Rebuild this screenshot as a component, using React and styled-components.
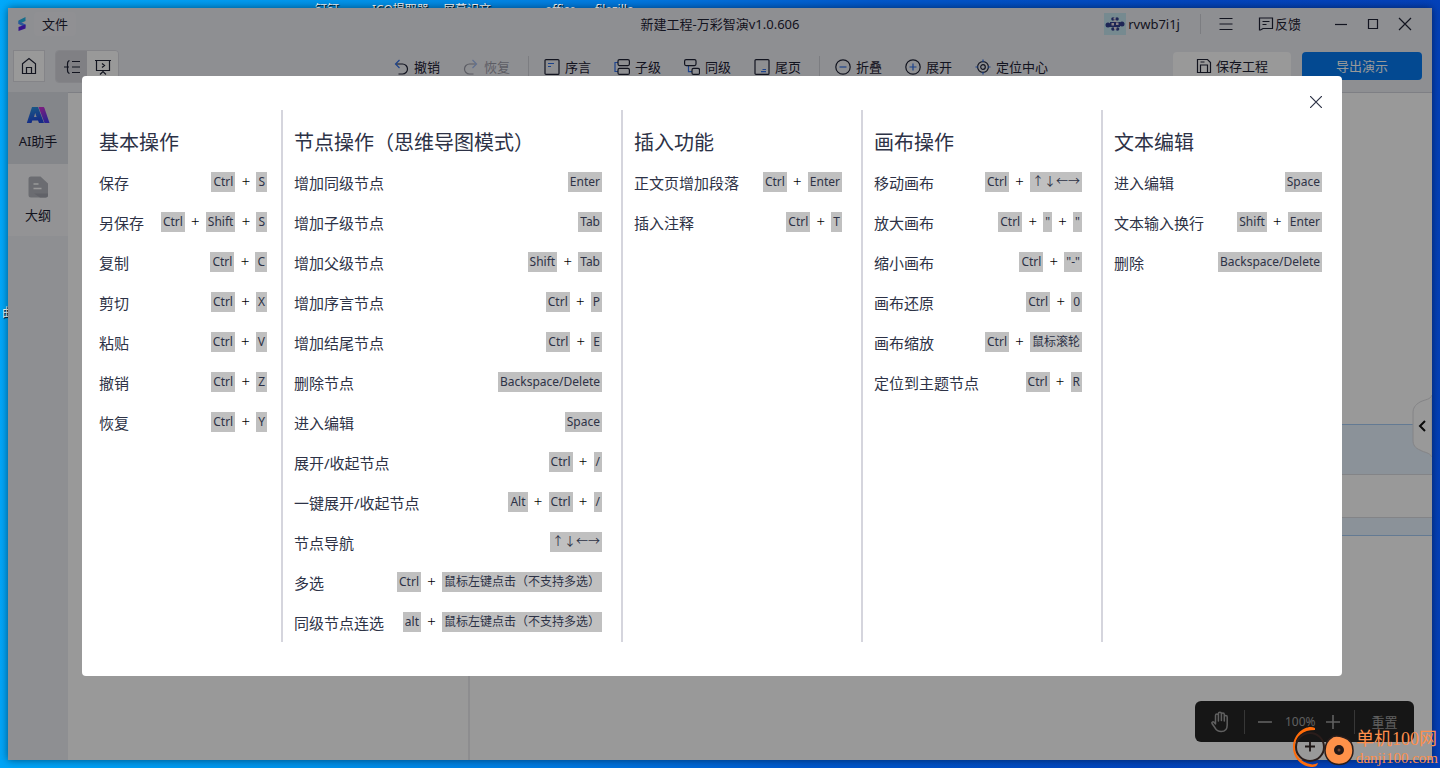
import React from 'react'
import styled, { createGlobalStyle } from 'styled-components'

const GlobalStyle = createGlobalStyle`
  * {
    box-sizing: border-box;
  }
  body {
    margin: 0;
    font-family: "Noto Sans", "Noto Sans CJK SC", sans-serif;
    font-size: 13px;
    line-height: 20px;
    color: #1e2235;
  }
  button {
    font: inherit;
    color: inherit;
    background: none;
    border: 0;
    padding: 0;
    cursor: pointer;
  }
  svg {
    display: block;
    flex: none;
  }
`

const columns = [
  {
    title: '基本操作',
    rows: [
      ['保存', ['Ctrl', 'S']],
      ['另保存', ['Ctrl', 'Shift', 'S']],
      ['复制', ['Ctrl', 'C']],
      ['剪切', ['Ctrl', 'X']],
      ['粘贴', ['Ctrl', 'V']],
      ['撤销', ['Ctrl', 'Z']],
      ['恢复', ['Ctrl', 'Y']],
    ],
  },
  {
    title: '节点操作（思维导图模式）',
    rows: [
      ['增加同级节点', ['Enter']],
      ['增加子级节点', ['Tab']],
      ['增加父级节点', ['Shift', 'Tab']],
      ['增加序言节点', ['Ctrl', 'P']],
      ['增加结尾节点', ['Ctrl', 'E']],
      ['删除节点', ['Backspace/Delete']],
      ['进入编辑', ['Space']],
      ['展开/收起节点', ['Ctrl', '/']],
      ['一键展开/收起节点', ['Alt', 'Ctrl', '/']],
      ['节点导航', ['↑↓←→']],
      ['多选', ['Ctrl', '鼠标左键点击（不支持多选）']],
      ['同级节点连选', ['alt', '鼠标左键点击（不支持多选）']],
    ],
  },
  {
    title: '插入功能',
    rows: [
      ['正文页增加段落', ['Ctrl', 'Enter']],
      ['插入注释', ['Ctrl', 'T']],
    ],
  },
  {
    title: '画布操作',
    rows: [
      ['移动画布', ['Ctrl', '↑↓←→']],
      ['放大画布', ['Ctrl', '"', '"']],
      ['缩小画布', ['Ctrl', '"-"']],
      ['画布还原', ['Ctrl', '0']],
      ['画布缩放', ['Ctrl', '鼠标滚轮']],
      ['定位到主题节点', ['Ctrl', 'R']],
    ],
  },
  {
    title: '文本编辑',
    rows: [
      ['进入编辑', ['Space']],
      ['文本输入换行', ['Shift', 'Enter']],
      ['删除', ['Backspace/Delete']],
    ],
  },
]

const desktopLabels = [
  { text: '钉钉', left: 315, top: 0 },
  { text: 'ICO提取器', left: 372, top: 0 },
  { text: '屏幕识文 ...', left: 443, top: 0 },
  { text: 'office', left: 545, top: 0 },
  { text: 'filezilla', left: 595, top: 0 },
  { text: '曲', left: 2, top: 303 },
]

const blue = '#2f6fe8'

const Icon = ({ children, size = 16, w = size, h = size }) => (
  <svg width={w} height={h} viewBox={`0 0 ${w} ${h}`} fill="none" stroke="currentColor" strokeWidth="1.2" aria-hidden="true">
    {children}
  </svg>
)

const LogoIcon = () => (
  <Icon w={10} h={16}>
    <path d="M8.500 1v4L1.500 8V4.500z" fill="#26b7e8" stroke="none" />
    <path d="M1.500 5l7 3.500v3L1.500 8z" fill="#4a8fff" stroke="none" />
    <path d="M8.500 8.500v4L1.500 15v-4z" fill="#5a22e8" stroke="none" />
  </Icon>
)

const HomeIcon = () => (
  <Icon size={18}>
    <path d="M2.500 6.800L9 1.500l6.500 5.300v9.700h-13zM6.500 16v-5.500h5V16" />
  </Icon>
)

const MindIcon = () => (
  <Icon w={18} h={16}>
    <path d="M1 8h5M6.500 1.500C4.500 2 4.500 4 4.500 5v6c0 1 0 3 2 3.500M9 2.500h8M9 8h8M9 13.500h8" />
  </Icon>
)

const BoardIcon = () => (
  <Icon w={18} h={16}>
    <path d="M1 1.500h16M2.500 1.500v10h13v-10M8 4.500l2.500 2L8 8.500M6 15.500l3-3 3 3" />
  </Icon>
)

const UndoIcon = () => (
  <Icon>
    <path d="M3 5h6.500a4.600 4.600 0 0 1 0 10H5.500" />
    <path d="M6.500 1L2.500 5l4 4" stroke={blue} />
  </Icon>
)

const RedoIcon = () => (
  <Icon>
    <path d="M13 5H6.500a4.600 4.600 0 0 0 0 10h4" />
    <path d="M9.500 1l4 4-4 4" stroke={blue} />
  </Icon>
)

const PrefaceIcon = () => (
  <Icon>
    <rect x="1" y=".6" width="14" height="14.800" rx="1" />
    <path d="M4 4.500h6M4 7.500h3" stroke={blue} />
  </Icon>
)

const ChildIcon = () => (
  <Icon>
    <path d="M4 3.500H1v9h3" stroke={blue} />
    <rect x="4" y=".6" width="11.400" height="6" rx="1.500" />
    <rect x="4" y="9.400" width="11.400" height="6" rx="1.500" />
  </Icon>
)

const SiblingIcon = () => (
  <Icon>
    <path d="M4.500 6.600v6H8" stroke={blue} />
    <rect x=".6" y=".6" width="11.400" height="6" rx="1.500" />
    <rect x="8" y="9.400" width="7.500" height="6" rx="1.500" />
  </Icon>
)

const EndPageIcon = () => (
  <Icon>
    <rect x="1" y=".6" width="14" height="14.800" rx="1" />
    <path d="M8.500 10.500h3.500M7 12.700h5" stroke={blue} />
  </Icon>
)

const FoldIcon = () => (
  <Icon>
    <circle cx="8" cy="8" r="7.200" />
    <path d="M4.500 8h7" stroke={blue} />
  </Icon>
)

const UnfoldIcon = () => (
  <Icon>
    <circle cx="8" cy="8" r="7.200" />
    <path d="M4.500 8h7M8 4.500v7" stroke={blue} />
  </Icon>
)

const LocateIcon = () => (
  <Icon>
    <circle cx="8" cy="8" r="5.400" />
    <circle cx="8" cy="8" r="2.300" />
    <path d="M8 .5v2.500M8 13v2.500M.5 8H3M13 8h2.500" stroke={blue} />
  </Icon>
)

const SaveIcon = () => (
  <Icon>
    <path d="M1.500 1.500h10l3 3v10h-13zM4.500 14.500V7h7v7.500M4.500 4h4" />
  </Icon>
)

const AiIcon = () => (
  <svg width="24" height="18" viewBox="0 0 24 18" aria-hidden="true">
    <defs>
      <linearGradient id="aiBlue" x1="0" y1="0" x2="0.300" y2="1">
        <stop offset="0" stopColor="#2d9be0" />
        <stop offset="1" stopColor="#2148e0" />
      </linearGradient>
      <linearGradient id="aiPink" x1="0" y1="0" x2="0.500" y2="1">
        <stop offset="0" stopColor="#e02fd0" />
        <stop offset="1" stopColor="#4a3cf0" />
      </linearGradient>
    </defs>
    <path d="M12.500 1H17c.8 0 1.200.5 1.500 1.200L23.500 17h-5z" fill="url(#aiPink)" />
    <path fillRule="evenodd" d="M6 1h6l6 16h-5l-1-2.500H6.300L5.500 17H.8zM9.200 7L8 11h2.600z" fill="url(#aiBlue)" />
  </svg>
)

const OutlineIcon = () => (
  <svg width="20" height="22" viewBox="0 0 20 22" aria-hidden="true">
    <path d="M3 .5h9.500L20 7.500V19a2.500 2.500 0 0 1-2.500 2.500H3A2.500 2.500 0 0 1 .5 19V3A2.500 2.500 0 0 1 3 .5z" fill="#b3b5bd" />
    <path d="M6 17.500h14V19a2.500 2.500 0 0 1-2.500 2.500H12z" fill="#a2a4ad" />
    <path d="M5.500 8h5M5.500 12.500h8" stroke="#fff" strokeWidth="1.600" />
  </svg>
)

const AvatarIcon = () => (
  <svg width="22" height="22" viewBox="0 0 22 22" aria-hidden="true">
    <path d="M0 0h22v22H0z" fill="#c5e6f0" />
    <g fill="#32408f">
      <circle cx="4" cy="12" r="2.500" />
      <circle cx="18" cy="11" r="2.500" />
      <circle cx="9" cy="6" r="1.800" />
      <circle cx="13" cy="6" r="1.800" />
      <circle cx="9" cy="16" r="1.800" />
      <circle cx="13.500" cy="16" r="1.800" />
      <path d="M6 9h10v5H6z" />
    </g>
    <path d="M7.500 10h2.500v2.500H7.500zM12 9.500h2.500V12H12zM9.500 5h2v1.500h-2zM10 14h2.500v2.500H10zM9.500 7.500h3V9h-3z" fill="#e8d9e4" />
  </svg>
)

const HandIcon = () => (
  <svg width="20" height="22" viewBox="0 0 20 22" fill="none" stroke="currentColor" strokeWidth="1.500" strokeLinecap="round" strokeLinejoin="round" aria-hidden="true">
    <path d="M5.500 13V4.500a1.400 1.400 0 0 1 2.900 0V10M8.400 9V2.700a1.500 1.500 0 0 1 3 0V9.500M11.400 3.500a1.400 1.400 0 0 1 2.900 0V10M14.300 6a1.400 1.400 0 0 1 2.900 0v8c0 4-2 6.500-6 6.500-3.500 0-5-1.500-6.200-3.700L2 12.500c-.7-1.300 1-2.200 2-1.200L5.500 13" />
  </svg>
)

const WatermarkLogo = () => (
  <svg width="64" height="42" viewBox="0 0 64 42" aria-hidden="true">
    <path d="M23 2C15-2 1 7 1 21c0 12 9 19 18 20 5 0 6-1 7-4-3 1-5 2-8 1C9 36 3 30 3 21 3 10 11 4 23 4z" fill="#ff6c0a" />
    <circle cx="18" cy="21" r="14" fill="none" stroke="#2a1d1b" strokeWidth="2" />
    <path d="M18 15.500v10M13 20.500h10" stroke="#1d1615" strokeWidth="1.800" />
    <path d="M41 10.500c3-1 8 0 11 1 6 2 9 7 9 13 0 8-6 14-14 14s-14-6-14-14c0-6 3-11 8-14z" fill="#ff9149" stroke="#2a1d1b" strokeWidth="1.500" />
    <circle cx="47" cy="24" r="5" fill="#241817" />
    <circle cx="47" cy="24" r="1.500" fill="#6b4030" />
  </svg>
)

const menuGroups = [
  [
    { label: '撤销', icon: <UndoIcon /> },
    { label: '恢复', icon: <RedoIcon />, disabled: true },
  ],
  [
    { label: '序言', icon: <PrefaceIcon /> },
    { label: '子级', icon: <ChildIcon /> },
    { label: '同级', icon: <SiblingIcon /> },
    { label: '尾页', icon: <EndPageIcon /> },
  ],
  [
    { label: '折叠', icon: <FoldIcon /> },
    { label: '展开', icon: <UnfoldIcon /> },
    { label: '定位中心', icon: <LocateIcon /> },
  ],
]

const App = () => {
  return (
    <Desktop>
      <GlobalStyle />
      {desktopLabels.map(item => (
        <DesktopLabel key={item.text} $left={item.left} $top={item.top}>{item.text}</DesktopLabel>
      ))}
      <Window>
        {/* title bar */}
        <TitleBar>
          <TitleLeft>
            <LogoIcon />
            <FileButton type="button">文件</FileButton>
          </TitleLeft>
          <Title>新建工程-万彩智演v1.0.606</Title>
          <TitleRight>
            <UserButton type="button"><AvatarIcon />rvwb7i1j</UserButton>
            <Separator />
            <IconButton type="button" aria-label="菜单">
              <Icon w={14} h={14}><path d="M.5 1.500h13M.5 7h13M.5 12.500h13" /></Icon>
            </IconButton>
            <FeedbackButton type="button">
              <Icon w={16} h={14}><path d="M1.500 1h13v10.500H5L2.500 13h-1zM4.500 4.500h7M4.500 7.500h4" /></Icon>
              反馈
            </FeedbackButton>
            <WindowButtons>
              <IconButton type="button" aria-label="最小化">
                <Icon w={14} h={14}><path d="M1 7.500h12" /></Icon>
              </IconButton>
              <IconButton type="button" aria-label="最大化">
                <Icon w={14} h={14}><path d="M2.500 2.500h9v9h-9z" /></Icon>
              </IconButton>
              <IconButton type="button" aria-label="关闭">
                <Icon w={14} h={14}><path d="M1 1l12 12M13 1L1 13" /></Icon>
              </IconButton>
            </WindowButtons>
          </TitleRight>
        </TitleBar>

        {/* toolbar */}
        <Toolbar>
          <ToolLeft>
            <HomeButton type="button" aria-label="主页"><HomeIcon /></HomeButton>
            <ModeSwitch>
              <ModeButton type="button" aria-label="思维导图" $active><MindIcon /></ModeButton>
              <ModeButton type="button" aria-label="演示"><BoardIcon /></ModeButton>
            </ModeSwitch>
          </ToolLeft>
          <Menu>
            {menuGroups.map((group, i) => (
              <MenuGroup key={i}>
                {group.map(item => (
                  <MenuButton type="button" key={item.label} disabled={item.disabled}>
                    {item.icon}
                    {item.label}
                  </MenuButton>
                ))}
              </MenuGroup>
            ))}
          </Menu>
          <ToolRight>
            <SaveButton type="button"><SaveIcon />保存工程</SaveButton>
            <ExportButton type="button">导出演示</ExportButton>
          </ToolRight>
        </Toolbar>

        <Body>
          <Sidebar>
            <SideButton type="button"><AiIcon />AI助手</SideButton>
            <SideButton type="button" $active><OutlineIcon />大纲</SideButton>
          </Sidebar>
          <OutlinePanel />
          <Canvas>
            <Band $height={51} $edge="top" />
            <BandGap />
            <Band $height={19} $edge="bottom" />
            <CollapseButton type="button" aria-label="收起面板">
              <svg width="20" height="64" viewBox="0 0 20 64" aria-hidden="true">
                <path d="M20 1c-2 5-6 4-12 7-5 3-7 6-7 11v27c0 5 2 8 7 10 5 3 9 2 12 7z" fill="#fff" stroke="#dcdce0" />
                <path d="M13 27l-5 5 5 5" fill="none" stroke="#111" strokeWidth="2" />
              </svg>
            </CollapseButton>
            <ZoomBar>
              <ZoomButton type="button" aria-label="拖动" $width={49}><HandIcon /></ZoomButton>
              <ZoomLine />
              <ZoomButton type="button" aria-label="缩小" $width={40}>
                <Icon w={14} h={14}><path d="M0 7h14" strokeWidth="1.600" /></Icon>
              </ZoomButton>
              <ZoomValue>100%</ZoomValue>
              <ZoomButton type="button" aria-label="放大" $width={34}>
                <Icon w={14} h={14}><path d="M0 7h14M7 0v14" strokeWidth="1.600" /></Icon>
              </ZoomButton>
              <ZoomSpacer />
              <ZoomLine />
              <ZoomButton type="button" $width={59}>重置</ZoomButton>
            </ZoomBar>
          </Canvas>
        </Body>

        {/* shortcut dialog */}
        <Overlay>
          <Dialog role="dialog" aria-modal="true">
            <CloseButton type="button" aria-label="关闭">
              <Icon w={12} h={12}><path d="M0 0l12 12M12 0L0 12" /></Icon>
            </CloseButton>
            {columns.map(col => (
              <Column key={col.title}>
                <ColumnTitle>{col.title}</ColumnTitle>
                {col.rows.map(([label, keys]) => (
                  <Row key={label}>
                    <RowLabel>{label}</RowLabel>
                    <Keys>
                      {keys.map((key, i) => (
                        <React.Fragment key={i}>
                          {i > 0 && <Plus>+</Plus>}
                          <Key>{key}</Key>
                        </React.Fragment>
                      ))}
                    </Keys>
                  </Row>
                ))}
              </Column>
            ))}
          </Dialog>
        </Overlay>
      </Window>
      <Watermark>
        <WatermarkLogo />
        <WatermarkText>
          <strong>单机100网</strong>
          <small>danji100.com</small>
        </WatermarkText>
      </Watermark>
    </Desktop>
  )
}

const Desktop = styled.div`
  position: relative;
  display: flex;
  min-height: 100vh;
  padding: 8px;
  overflow: hidden;
  background: linear-gradient(95deg, #00a9fb 0%, #0092ea 25%, #0078e0 42%, #0058cc 58%, #0345bd 80%, #0440b8 100%);
`
const DesktopLabel = styled.span`
  position: absolute;
  left: ${p => p.$left}px;
  top: ${p => p.$top}px;
  font-size: 12px;
  white-space: nowrap;
  color: #fff;
  text-shadow: 1px 1px 1px #000;
`
const Window = styled.div`
  position: relative;
  flex: 1;
  min-width: 0;
  display: flex;
  flex-direction: column;
  background: #edeef4;
  box-shadow: 0 0 8px rgba(0, 0, 0, 0.5);
`
const TitleBar = styled.header`
  display: grid;
  grid-template-columns: 1fr auto 1fr;
  align-items: center;
  height: 32px;
`
const TitleLeft = styled.div`
  display: flex;
  align-items: center;
  gap: 7px;
  padding-left: 9px;
`
const FileButton = styled.button`
  height: 24px;
  padding: 0 8px;
  border-radius: 4px;
  background: #f0f1f6;
`
const Title = styled.h1`
  margin: 0;
  font-size: 13px;
  font-weight: 400;
`
const TitleRight = styled.div`
  display: flex;
  justify-content: flex-end;
  align-items: center;
  padding-right: 20px;
`
const UserButton = styled.button`
  display: flex;
  align-items: center;
  gap: 2px;
`
const Separator = styled.span`
  width: 1px;
  height: 20px;
  margin: 0 18px 0 20px;
  background: #cfd0d8;
`
const IconButton = styled.button`
  display: flex;
`
const FeedbackButton = styled.button`
  display: flex;
  align-items: center;
  gap: 1px;
  margin-left: 25px;
`
const WindowButtons = styled.div`
  display: flex;
  gap: 18px;
  margin-left: 33px;
`
const Toolbar = styled.div`
  display: grid;
  grid-template-columns: 1fr auto 1fr;
  height: 52px;
  padding: 10px 10px 0 5px;
`
const ToolLeft = styled.div`
  display: flex;
  align-items: flex-start;
  gap: 10px;
`
const HomeButton = styled.button`
  display: grid;
  place-items: center;
  width: 32px;
  height: 32px;
  border: 1px solid #dcdde3;
  background: #fff;
`
const ModeSwitch = styled.div`
  display: flex;
  height: 33px;
  border: 1px solid #dcdde3;
  border-radius: 4px;
  overflow: hidden;
`
const ModeButton = styled.button`
  display: grid;
  place-items: center;
  width: 31px;
  background: ${p => (p.$active ? '#d5d6dd' : '#fff')};
`
const Menu = styled.nav`
  display: flex;
  align-items: flex-start;
  padding: 6px 0 0 6px;
`
const MenuGroup = styled.div`
  display: flex;
  gap: 23px;

  & + & {
    margin-left: 18px;
    padding-left: 15px;
    border-left: 1px solid #cfd0d8;
  }
`
const MenuButton = styled.button`
  display: flex;
  align-items: center;
  gap: 5px;
  height: 22px;

  &:disabled {
    opacity: 0.4;
  }
`
const ToolRight = styled.div`
  display: flex;
  justify-content: flex-end;
  align-items: flex-start;
  gap: 11px;
  padding-top: 2px;
`
const SaveButton = styled.button`
  display: flex;
  align-items: center;
  justify-content: center;
  gap: 4px;
  width: 118px;
  height: 28px;
  border-radius: 4px;
  background: #fff;
`
const ExportButton = styled.button`
  width: 120px;
  height: 28px;
  border-radius: 4px;
  background: #057bf2;
  color: #fff;
`
const Body = styled.div`
  flex: 1;
  display: flex;
`
const Sidebar = styled.nav`
  width: 60px;
`
const SideButton = styled.button`
  display: flex;
  flex-direction: column;
  align-items: center;
  justify-content: center;
  gap: 7px;
  width: 100%;
  height: 72px;
  background: ${p => (p.$active ? '#f5f5f8' : '#dddfe6')};
`
const OutlinePanel = styled.aside`
  width: 402px;
  background: #fff;
  border-top: 1px solid #d3d4dc;
  border-right: 2px solid #ececee;
`
const Canvas = styled.main`
  position: relative;
  flex: 1;
  padding-top: 331px;
  background: #fff;
  border-top: 1px solid #d3d4dc;
`
const Band = styled.div`
  height: ${p => p.$height}px;
  background: #e8f3ff;
  border-top: 1px solid ${p => (p.$edge === 'top' ? '#a6ccf5' : '#dadde2')};
  border-bottom: 1px solid ${p => (p.$edge === 'bottom' ? '#a6ccf5' : '#dadde2')};
`
const BandGap = styled.div`
  height: 42px;
`
const CollapseButton = styled.button`
  position: absolute;
  right: 0;
  top: 301px;
`
const ZoomBar = styled.div`
  position: absolute;
  right: 18px;
  bottom: 18px;
  display: flex;
  align-items: center;
  width: 219px;
  height: 41px;
  border-radius: 6px;
  background: #262626;
  color: #a0a0a0;
`
const ZoomButton = styled.button`
  display: grid;
  place-items: center;
  width: ${p => p.$width}px;
  height: 100%;
`
const ZoomValue = styled.span`
  font-size: 12px;
`
const ZoomLine = styled.span`
  width: 1px;
  height: 24px;
  background: #5c5c5c;
`
const ZoomSpacer = styled.span`
  flex: 1;
`
const Overlay = styled.div`
  position: absolute;
  inset: 0;
  display: flex;
  align-items: center;
  padding: 0 90px 16px 74px;
  background: rgba(0, 0, 0, 0.4);
`
const Dialog = styled.section`
  position: relative;
  flex: 1;
  display: grid;
  grid-template-columns: 201fr 340fr 240fr 240fr 239fr;
  padding: 34px 0;
  border-radius: 4px;
  background: #fff;
  color: #2d3246;
`
const CloseButton = styled.button`
  position: absolute;
  top: 20px;
  right: 20px;
`
const Column = styled.div`
  padding: 13px 19px 0 11px;
  border-right: 2px solid #d5d5dd;

  &:first-of-type {
    padding: 13px 14px 0 17px;
  }
  &:last-of-type {
    padding-right: 20px;
    border-right: 0;
  }
`
const ColumnTitle = styled.h2`
  margin: 0;
  font-size: 20px;
  font-weight: 400;
  line-height: 39px;
  white-space: nowrap;
`
const Row = styled.div`
  display: flex;
  justify-content: space-between;
  align-items: center;
  height: 40px;
`
const RowLabel = styled.span`
  padding-top: 2px;
  font-size: 15px;
  white-space: nowrap;
`
const Keys = styled.span`
  display: flex;
  align-items: center;
  white-space: nowrap;
`
const Key = styled.kbd`
  height: 20px;
  padding: 0 2px;
  background: #c0c0c0;
  font-family: inherit;
  font-size: 12px;
`
const Plus = styled.span`
  width: 21px;
  padding-bottom: 2px;
  font-family: "Liberation Serif", serif;
  font-size: 15px;
  text-align: center;
  color: #000;
`
const Watermark = styled.div`
  position: absolute;
  right: 2px;
  bottom: 0;
  display: flex;
  align-items: center;
  color: #ff8f4c;
`
const WatermarkText = styled.div`
  display: flex;
  flex-direction: column;
  padding-top: 2px;
  font-family: "Liberation Serif", "Noto Sans CJK SC", serif;
  white-space: nowrap;

  strong {
    font-size: 18px;
    font-weight: 400;
  }
  small {
    font-size: 15px;
    line-height: 18px;
  }
`

export default App
